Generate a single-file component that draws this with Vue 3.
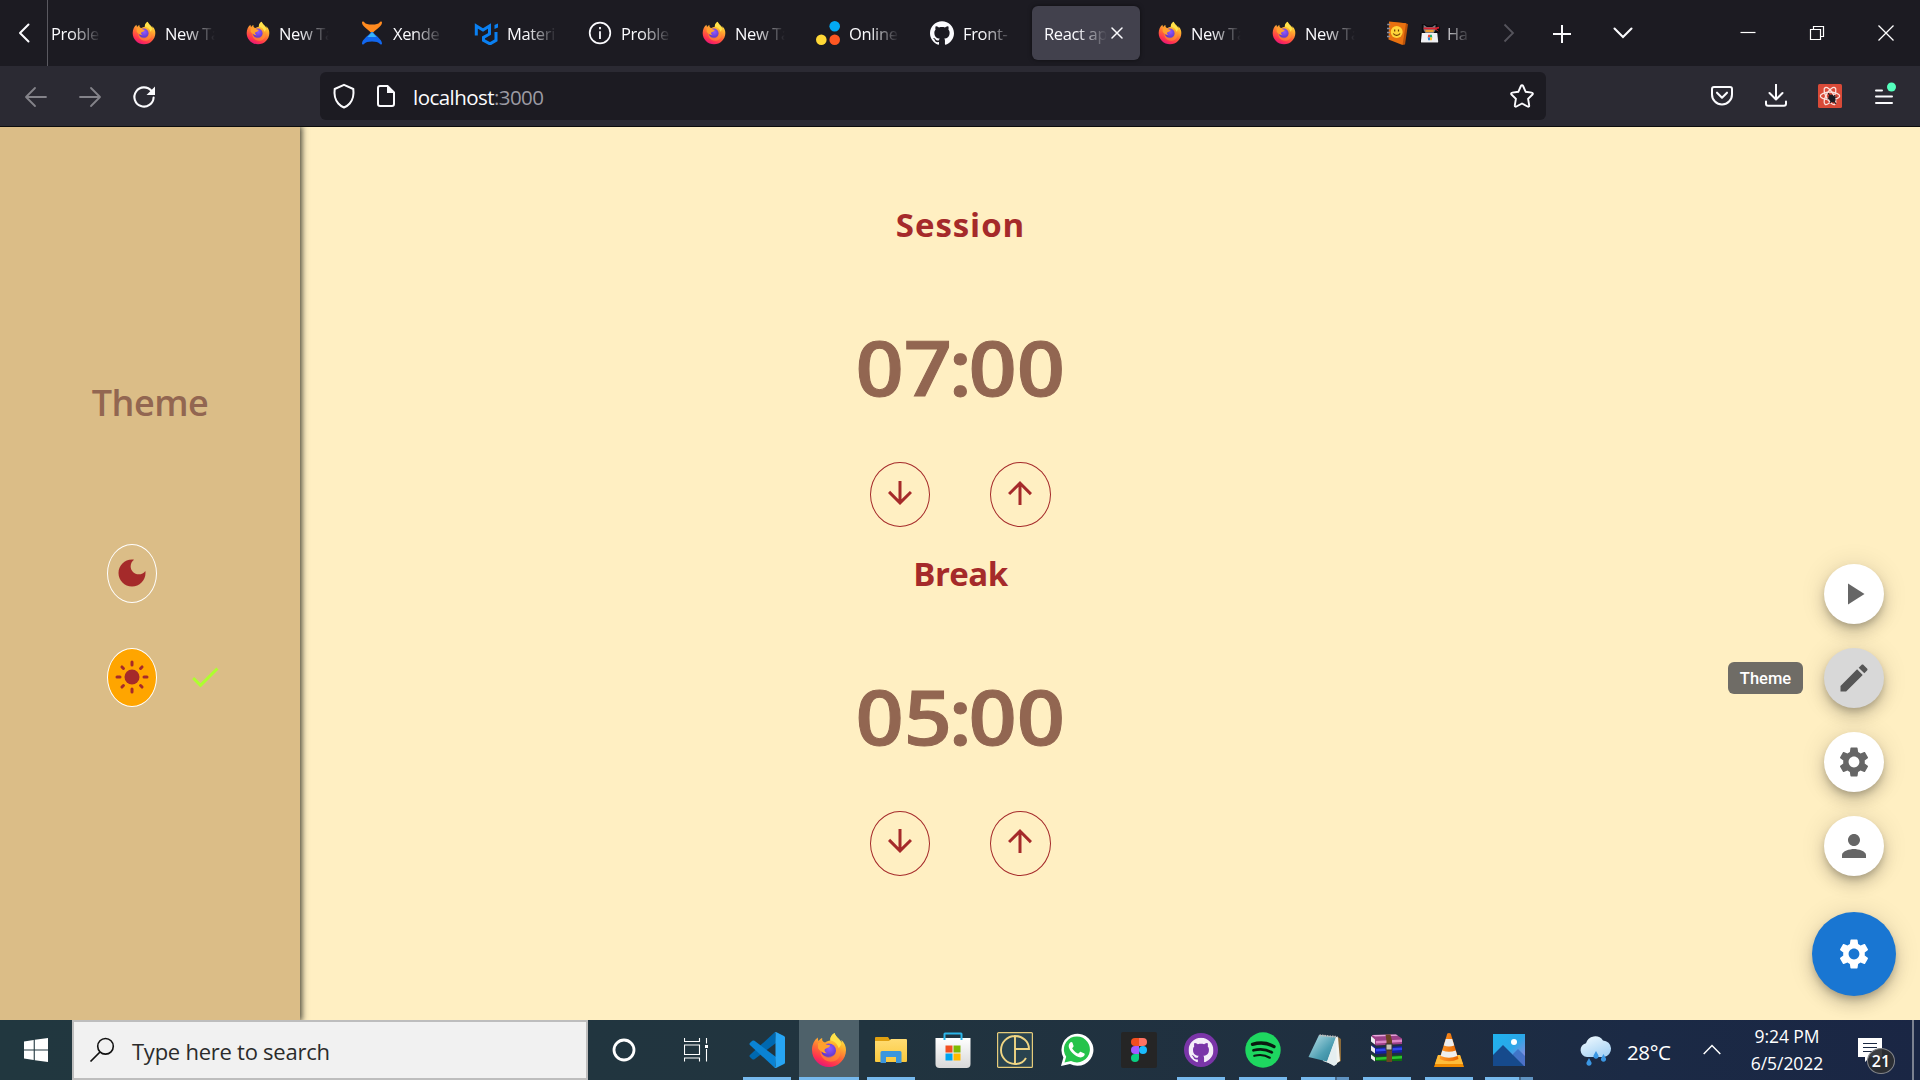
<script setup>
const tabs = [
  { title: 'Proble', kind: 'partial' },
  { title: 'New Ta', icon: 'firefox' },
  { title: 'New Ta', icon: 'firefox' },
  { title: 'Xende', icon: 'xender' },
  { title: 'Materi', icon: 'mui' },
  { title: 'Proble', icon: 'info' },
  { title: 'New Ta', icon: 'firefox' },
  { title: 'Online', icon: 'dots' },
  { title: 'Front-', icon: 'github' },
  { title: 'React ap', kind: 'active' },
  { title: 'New Ta', icon: 'firefox' },
  { title: 'New Ta', icon: 'firefox' },
  { title: 'Ha', icon: 'book', extra: 'ninja', kind: 'last' },
]

const timers = [
  { label: 'Session', time: '07:00', key: 'session' },
  { label: 'Break', time: '05:00', key: 'break' },
]

const apps = [
  { icon: 'vscode', run: true },
  { icon: 'firefox', run: true, active: true },
  { icon: 'explorer', run: true },
  { icon: 'store' },
  { icon: 'ce' },
  { icon: 'whatsapp' },
  { icon: 'figma' },
  { icon: 'ghdesktop', run: true },
  { icon: 'spotify', run: true },
  { icon: 'notepad', run: true, multi: true },
  { icon: 'winrar', run: true },
  { icon: 'vlc', run: true },
  { icon: 'photos', run: true, multi: true },
]

const actions = ['play', 'edit', 'settings', 'person']
</script>

<template>
  <div class="screen">
    <svg class="sprite" width="0" height="0" aria-hidden="true">
      <defs>
        <linearGradient id="ffBody" x1="0.75" y1="0" x2="0.3" y2="1">
          <stop offset="0" stop-color="#fff44f" />
          <stop offset="0.3" stop-color="#ffb52e" />
          <stop offset="0.58" stop-color="#ff6a36" />
          <stop offset="0.82" stop-color="#ff3150" />
          <stop offset="1" stop-color="#e0137f" />
        </linearGradient>
        <radialGradient id="ffGlobe" cx="0.55" cy="0.35" r="0.7">
          <stop offset="0" stop-color="#9059ff" />
          <stop offset="1" stop-color="#5a2fc0" />
        </radialGradient>
        <linearGradient id="folder" x1="0" y1="0" x2="0" y2="1">
          <stop offset="0" stop-color="#ffdc73" />
          <stop offset="1" stop-color="#fbc93d" />
        </linearGradient>
        <linearGradient id="bag" x1="0" y1="0" x2="0" y2="1">
          <stop offset="0" stop-color="#ffffff" />
          <stop offset="1" stop-color="#d8d8d8" />
        </linearGradient>
        <linearGradient id="pad" x1="0" y1="0" x2="1" y2="1">
          <stop offset="0" stop-color="#bfe3ea" />
          <stop offset="0.6" stop-color="#4e9fb3" />
          <stop offset="1" stop-color="#2f7f96" />
        </linearGradient>
        <linearGradient id="cone" x1="0" y1="0" x2="1" y2="0">
          <stop offset="0" stop-color="#ff9a2a" />
          <stop offset="1" stop-color="#e86500" />
        </linearGradient>
        <linearGradient id="sky" x1="0" y1="0" x2="1" y2="1">
          <stop offset="0" stop-color="#1fb3ee" />
          <stop offset="0.5" stop-color="#2aa7e8" />
          <stop offset="1" stop-color="#b07fd8" />
        </linearGradient>
        <linearGradient id="cloud" x1="0" y1="0" x2="0.6" y2="1">
          <stop offset="0" stop-color="#f3fbff" />
          <stop offset="1" stop-color="#a9d4f5" />
        </linearGradient>
      </defs>

      <symbol id="i-firefox" viewBox="0 0 36 36">
        <path fill="url(#ffBody)" d="M33.8 12.5c-.8-1.9-2.4-3.9-3.7-4.6.4.9.8 1.9 1 2.9C29 6.700 25 5.500 23.500 1c-3 1.500-4.500 4.500-4.200 7.500-2 .2-3.800.9-5.200 2-.8-.3-1.800-.5-2.500-1.500-.5-.8-.5-2-.4-3-1.500.5-2.800 1.600-3.500 3-.7-1-1-2.300-.8-3.500C3.500 7.500 1 12.500 1 18c0 9.500 7.600 17 17 17s17-7.500 17-17c0-2-.4-3.800-1.200-5.500z" />
        <path fill="#ffe14a" d="M23.500 1c-3 1.500-4.500 4.500-4.200 7.500 4 .2 7.700 3.500 8.200 8l2.800-4C29.500 7.500 25 5.800 23.500 1z" />
        <circle cx="17.700" cy="18.700" r="7.300" fill="url(#ffGlobe)" />
        <path fill="#ffa02e" d="M7 11c2-1 5-.7 7 .4 1.300 1.300 2.500 1.400 4.300 1.600 1 .1.500 1.700-.3 2.200-1.500.9-3.600 1-4.200 2-.8 1.400.5 3.400 2.200 4-3.500.3-7-2-9-5z" />
        <path fill="#ff9b30" d="M9 18c1.500 6 8 8.500 13 5.500 4-2.400 4.500-8 .5-11.500 5 1.500 7.500 6 6.500 11-1.500 6.500-9.500 8.500-15 5-3.500-2.200-5-6-5-10z" opacity="0.55" />
      </symbol>

      <symbol id="i-xender" viewBox="0 0 24 24">
        <path fill="#ff8a1f" d="M2 1.500c0-1.400 1.800-1.500 2.500 0Q6 3.500 12 3.500T19.500 1.500c.7-1.500 2.500-1.400 2.500 0C22 5.500 16 8 12.800 12h-1.600C8 8 2 5.500 2 1.500z" />
        <path fill="#1267ee" d="M11.200 11h1.600C16 15 22 18.500 22 22.500c0 1.400-1.800 1.500-2.500 0Q18 20.500 12 20.500T4.500 22.500c-.7 1.500-2.500 1.400-2.500 0C2 18.500 8 15 11.200 11z" />
        <path fill="#39b4f7" d="m12 11 4.500 5h-9z" />
      </symbol>

      <symbol id="i-mui" viewBox="0 0 24 24">
        <path fill="none" stroke="#0a80f2" stroke-width="3" d="M2.300 14.500V5L9 9l6.500-4v8l-6 3.400v3l6.500 3.500 6-3.500V11" />
        <path fill="#0a80f2" d="M20.500 4 24 2.500v4L20.500 8z" />
      </symbol>

      <symbol id="i-info" viewBox="0 0 24 24">
        <circle cx="12" cy="12" r="10.300" fill="none" stroke="#fbfbfe" stroke-width="1.700" />
        <path fill="none" stroke="#fbfbfe" stroke-width="1.800" d="M12 10.300V18M12 6v2.200" />
      </symbol>

      <symbol id="i-dots" viewBox="0 0 24 24">
        <circle cx="18.700" cy="5.300" r="5.300" fill="#03a9f4" />
        <circle cx="5.300" cy="18.700" r="5.300" fill="#ffd836" />
        <circle cx="18.700" cy="18.700" r="5.300" fill="#ff5722" />
      </symbol>

      <symbol id="i-github" viewBox="0 0 24 24">
        <path fill="currentColor" d="M12 .297c-6.630 0-12 5.373-12 12 0 5.303 3.438 9.800 8.205 11.385.6.113.82-.258.82-.577 0-.285-.01-1.040-.015-2.040-3.338.724-4.042-1.610-4.042-1.610C4.422 18.070 3.633 17.700 3.633 17.700c-1.087-.744.084-.729.084-.729 1.205.084 1.838 1.236 1.838 1.236 1.070 1.835 2.809 1.305 3.495.998.108-.776.417-1.305.76-1.605-2.665-.3-5.466-1.332-5.466-5.930 0-1.310.465-2.380 1.235-3.220-.135-.303-.54-1.523.105-3.176 0 0 1.005-.322 3.300 1.230.96-.267 1.980-.399 3-.405 1.020.006 2.040.138 3 .405 2.280-1.552 3.285-1.230 3.285-1.230.645 1.653.24 2.873.12 3.176.765.84 1.230 1.910 1.230 3.220 0 4.610-2.805 5.625-5.475 5.920.42.36.81 1.096.81 2.220 0 1.606-.015 2.896-.015 3.286 0 .315.21.69.825.57C20.565 22.092 24 17.592 24 12.297c0-6.627-5.373-12-12-12" />
      </symbol>

      <symbol id="i-book" viewBox="0 0 24 24">
        <path fill="#b9520a" d="M4 1 20 2.200l2 1L19 23.500l-2.500.5-1-2z" />
        <path fill="#e8710f" d="M3 .5 20 2.200 16.500 24 2.500 18.500z" />
        <path stroke="#8a8fa0" stroke-width="1.300" d="M1.200 3.500h3M1 7.500h3M1 11.500h3M1 15.500h3" />
        <circle cx="10.700" cy="11" r="6" fill="#ffd43a" />
        <path fill="none" stroke="#6b3b00" stroke-width="1.200" d="M8.700 8.500v2M12.500 8.500v2M7.300 12.500c1.500 2.500 5.200 2.500 6.800 0" />
      </symbol>

      <symbol id="i-ninja" viewBox="0 0 22 22">
        <path fill="#0b0b0e" d="M2 1h3l3 2h5l3-2h3v3h3v6l-3 2 1 10H0V11h2z" />
        <path fill="#777b82" d="M4 8V2l3.500 2.500h6L17 2v6l-2 3H6z" />
        <path fill="#f0a030" d="M6 7.500h9v2.500H6z" />
        <path fill="#dd2230" d="M4 5h13l4-1v2l-3 .5 3 3-5-2.500H4z" />
        <path fill="#f0f0f3" d="M2 11h17l1 9.500q0 1-1 1H2q-1 0-1-1z" />
        <path fill="#ee4433" d="M9 13h2v3H8.500z" />
        <path fill="#22aa66" d="M11 13h2l.5 3H11z" />
        <path fill="#2288dd" d="M8.500 16H11v3H9z" />
        <path fill="#ffbb22" d="M11 16h2.500L13 19h-2z" />
      </symbol>

      <symbol id="i-vscode" viewBox="0 0 36 36">
        <path fill="#0068b0" d="M26 0 .9 23Q0 24 .9 25L3.300 27.200Q4.400 28 5.500 27.200L27 11z" />
        <path fill="#0a83d4" d="M5.500 8.800Q4.400 8 3.300 8.800L.9 11Q0 12 .9 13L26 36l1-11z" />
        <path fill="#27a5f4" d="M26 .3Q26.600-.2 27.500.3L35 3.900q1 .5 1 1.600v25q0 1.100-1 1.600l-7.500 3.600q-1 .5-2-.4 1 .2 1-1.300V2Q26.500.4 26 .3z" />
      </symbol>

      <symbol id="i-explorer" viewBox="0 0 36 36">
        <path fill="#e0a010" d="M2 6q0-1 1-1h12l2 3v5H2z" />
        <path fill="url(#folder)" d="M2 9h14l2-2h15q1 0 1 1v21q0 1-1 1H3q-1 0-1-1z" />
        <path fill="#3b96dd" d="M9 19h18q1.500 0 1.500 1.500V31H23v-6H13v6H7.500V20.500Q7.500 19 9 19z" />
      </symbol>

      <symbol id="i-store" viewBox="0 0 36 36">
        <path fill="url(#bag)" d="M.5 6h35v26q0 4-4 4h-27q-4 0-4-4z" />
        <path fill="none" stroke="#2cb5e8" stroke-width="2" d="M9.500 8V2q0-.5.5-.5h16q.5 0 .5.500v6" />
        <path fill="#f25022" d="M10.500 13.500h7v7h-7z" />
        <path fill="#7fba00" d="M18.500 13.500h7v7h-7z" />
        <path fill="#00a4ef" d="M10.500 21.500h7v7h-7z" />
        <path fill="#ffb900" d="M18.500 21.500h7v7h-7z" />
      </symbol>

      <symbol id="i-ce" viewBox="0 0 36 36">
        <rect x="0.600" y="0.600" width="34.800" height="34.800" rx="1" fill="#29434f" stroke="#e6cb7a" stroke-width="1.200" />
        <path fill="none" stroke="#f0d583" stroke-width="1.900" d="M18 4A14 14 0 1 0 18 32V4c7 0 14 5 14 13H18M18 32c5 0 9-2.500 11-6" />
      </symbol>

      <symbol id="i-whatsapp" viewBox="0 0 36 36">
        <path fill="#fff" d="M2 34l2.400-8.500A16 16 0 1 1 11 32z" />
        <path fill="#25c34b" d="M5.500 30.500l1.700-5.700A13 13 0 1 1 12 29z" />
        <path fill="#fff" d="M13.400 10.500c-.6-.9-1.500-.7-2.200 0-3 3-1 7 2 10.200 3.300 3.600 8.300 6.300 11.500 3.600 1-.9 1.300-2.200.7-2.700l-3.300-1.700c-.8-.4-1.300.2-2 1.200-.5.6-1 .5-1.900.1-2.300-1-3.900-2.900-4.900-4.600-.5-1 1.500-1.600 1.300-2.700z" />
      </symbol>

      <symbol id="i-figma" viewBox="0 0 36 36">
        <rect width="36" height="36" rx="2" fill="#252525" />
        <path fill="#f24e1e" d="M14 6h4v8h-4a4 4 0 0 1 0-8z" />
        <path fill="#ff7262" d="M18 6h4a4 4 0 0 1 0 8h-4z" />
        <path fill="#a259ff" d="M14 14h4v8h-4a4 4 0 0 1 0-8z" />
        <circle cx="22" cy="18" r="4" fill="#1abcfe" />
        <path fill="#0acf83" d="M14 22h4v4a4 4 0 1 1-4-4z" />
      </symbol>

      <symbol id="i-ghdesktop" viewBox="0 0 36 36">
        <circle cx="18" cy="18" r="17" fill="#7a35a8" />
        <svg x="5.500" y="5.500" width="25" height="25" viewBox="0 0 24 24" color="#f4eef8">
          <use href="#i-github" />
        </svg>
      </symbol>

      <symbol id="i-spotify" viewBox="0 0 36 36">
        <circle cx="18" cy="18" r="17.700" fill="#1ed760" />
        <path fill="none" stroke="#0a1a10" stroke-linecap="round" stroke-width="3.300" d="M7.500 12.300c7-2 15.500-1.300 21.500 2.300" />
        <path fill="none" stroke="#0a1a10" stroke-linecap="round" stroke-width="2.700" d="M8.500 18.300c6-1.700 13-1 18.300 2.100" />
        <path fill="none" stroke="#0a1a10" stroke-linecap="round" stroke-width="2.200" d="M9.300 23.800c5-1.300 11-.8 15.500 1.900" />
      </symbol>

      <symbol id="i-notepad" viewBox="0 0 36 36">
        <path fill="#8a6a3a" d="M31 5l3 2v22l-4 2z" />
        <path fill="#f4f4f0" d="M13 3l18 2 2 24-6 4-11-4z" />
        <path fill="url(#pad)" d="M12 3l17 2-9 24.500L1.500 25z" />
        <path fill="#e5eef0" d="M20 30l9-24 1 26-3 2z" />
        <path stroke="#b9b9b9" stroke-width="2" stroke-dasharray="1.500 1" d="M12.500 3.300l18 1.700" />
      </symbol>

      <symbol id="i-winrar" viewBox="0 0 36 36">
        <path fill="#9c4188" d="M3 3l24-.5 6 4V12L7 13.500 3 10z" />
        <path fill="#dc86c6" d="M7 9l26-1.500v2.500L7 11.500z" />
        <path fill="#e9a9dc" d="M3 3l24-.5 2 1.300-23 .8z" />
        <path fill="#1420a0" d="M3 13l4 3 26-2v6.500L7 22l-4-3z" />
        <path fill="#3247ee" d="M7 17l26-1.500v2.500L7 19.500z" />
        <path fill="#0d6d12" d="M3 22l4 3 26-2v6H7l-4-3.500z" />
        <path fill="#2cc62e" d="M7 25.500l26-1.500v2.500L7 28z" />
        <path fill="#eee" d="M2 4l4 3.500v5L2 9.500zM2 13.500l4 3v5l-4-3zM2 22.500l4 3v4l-4-3z" />
        <path fill="#6b4423" d="M16.500 2.500h5l1.500 6v21.500h-5.500V9z" />
        <rect x="17" y="12" width="6" height="6" fill="#c9c2b2" stroke="#333" />
      </symbol>

      <symbol id="i-vlc" viewBox="0 0 36 36">
        <path fill="#f08a00" d="M7 23h22l4 12H3z" />
        <path fill="#ffbc3a" d="M7 23h22l3 9H4z" />
        <path fill="url(#cone)" d="M16.300 1.500q1.700-1 3.400 0L27.500 27q-9.500 4.500-19 0z" />
        <path fill="#eee" d="M14.800 7h6.400l2 6.500q-5.200 1.800-10.400 0zM11.300 18.500q6.700 2.500 13.400 0l1.600 5.500q-8.300 3.500-16.600 0z" />
      </symbol>

      <symbol id="i-photos" viewBox="0 0 36 36">
        <rect x="2" y="2" width="32" height="32" fill="url(#sky)" />
        <path fill="#3a6bc0" d="M22 34V22l5-5 7 7v10z" opacity="0.8" />
        <path fill="#164a8c" d="M2 23 12 13 33 34H2z" />
        <circle cx="23" cy="10" r="3" fill="#fff" />
      </symbol>

      <symbol id="i-weather" viewBox="0 0 36 36">
        <path fill="url(#cloud)" d="M9 23a7 7 0 0 1-1-13.800A9.500 9.500 0 0 1 25 6.500 8.300 8.300 0 0 1 26 23z" />
        <path fill="#3b97e3" d="M18 17l2.500 4.500a2.600 2.600 0 1 1-5 0zM11 24l2.500 4.500a2.600 2.600 0 1 1-5 0zM25.500 20l2.500 4.500a2.600 2.600 0 1 1-5 0z" />
      </symbol>

      <symbol id="i-play" viewBox="0 0 24 24"><path fill="currentColor" d="M8 5v14l11-7z" /></symbol>
      <symbol id="i-edit" viewBox="0 0 24 24"><path fill="currentColor" d="M3 17.250V21h3.750L17.810 9.940l-3.750-3.750L3 17.250zM20.710 7.040c.39-.39.39-1.020 0-1.410l-2.340-2.340c-.39-.39-1.020-.39-1.410 0l-1.830 1.830 3.750 3.750 1.830-1.830z" /></symbol>
      <symbol id="i-settings" viewBox="0 0 24 24"><path fill="currentColor" d="M19.140 12.940c.04-.3.06-.61.06-.94 0-.32-.02-.64-.07-.94l2.030-1.580c.18-.14.23-.41.12-.61l-1.920-3.320c-.12-.22-.37-.29-.59-.22l-2.390.96c-.5-.38-1.030-.7-1.620-.94l-.36-2.540c-.04-.24-.24-.41-.48-.41h-3.840c-.24 0-.43.17-.47.41l-.36 2.540c-.59.24-1.130.57-1.620.94l-2.390-.96c-.22-.08-.47 0-.59.22L2.740 8.870c-.12.21-.08.47.12.61l2.030 1.580c-.05.3-.09.63-.09.94s.02.64.07.94l-2.030 1.580c-.18.14-.23.41-.12.61l1.920 3.320c.12.22.37.29.59.22l2.390-.96c.5.38 1.030.7 1.620.94l.36 2.540c.05.24.24.41.48.41h3.840c.24 0 .44-.17.47-.41l.36-2.540c.59-.24 1.130-.56 1.620-.94l2.390.96c.22.08.47 0 .59-.22l1.920-3.320c.12-.22.07-.47-.12-.61l-2.010-1.580zM12 15.600c-1.980 0-3.600-1.620-3.600-3.600s1.620-3.600 3.600-3.600 3.600 1.620 3.600 3.600-1.620 3.600-3.600 3.600z" /></symbol>
      <symbol id="i-person" viewBox="0 0 24 24"><path fill="currentColor" d="M12 12c2.210 0 4-1.790 4-4s-1.790-4-4-4-4 1.790-4 4 1.790 4 4 4zm0 2c-2.670 0-8 1.340-8 4v2h16v-2c0-2.660-5.330-4-8-4z" /></symbol>
    </svg>

    <header class="tabbar">
      <div class="scroll-left">
        <svg width="12" height="20" viewBox="0 0 12 20"><path d="M10.500 1.500 2 10l8.500 8.500" fill="none" stroke="#fbfbfe" stroke-width="2" stroke-linecap="round" stroke-linejoin="round" /></svg>
      </div>
      <div v-for="(tab, i) in tabs" :key="i" class="tab" :class="tab.kind">
        <svg v-if="tab.icon" class="tab-icon" width="24" height="24"><use :href="'#i-' + tab.icon" /></svg>
        <svg v-if="tab.extra" class="tab-extra" width="20" height="22"><use :href="'#i-' + tab.extra" /></svg>
        <span class="tab-title">{{ tab.title }}</span>
        <svg v-if="tab.kind === 'active'" class="tab-close" width="12" height="12" viewBox="0 0 12 12"><path d="M1 1l10 10M11 1 1 11" stroke="#fbfbfe" stroke-width="1.500" stroke-linecap="round" /></svg>
      </div>
      <div class="tab-tools">
        <svg width="12" height="20" viewBox="0 0 12 20"><path d="M1.500 1.500 10 10l-8.500 8.500" fill="none" stroke="#55545c" stroke-width="1.800" /></svg>
        <svg class="plus" width="20" height="20" viewBox="0 0 20 20"><path d="M10 1v18M1 10h18" stroke="#fbfbfe" stroke-width="2" /></svg>
        <svg class="chev" width="20" height="12" viewBox="0 0 20 12"><path d="M1.500 1.500 10 10l8.500-8.500" fill="none" stroke="#fbfbfe" stroke-width="2.100" stroke-linecap="round" /></svg>
      </div>
      <div class="window-tools">
        <svg width="16" height="16" viewBox="0 0 16 16"><path d="M0.500 7.500h15" stroke="#fff" stroke-width="1.200" /></svg>
        <svg width="16" height="16" viewBox="0 0 16 16"><path d="M1.500 4.500h10v10h-10zM4.500 4.500v-3h10v10h-3" fill="none" stroke="#fff" stroke-width="1.200" /></svg>
        <svg width="16" height="16" viewBox="0 0 16 16"><path d="M.5.500l15 15M15.500.500l-15 15" stroke="#fff" stroke-width="1.300" /></svg>
      </div>
    </header>

    <div class="navbar">
      <div class="nav-buttons">
        <svg width="24" height="24" viewBox="0 0 24 24"><path d="M22 12H2.500M11 3l-9 9 9 9" fill="none" stroke="#84838a" stroke-width="1.800" stroke-linecap="round" stroke-linejoin="round" /></svg>
        <svg width="24" height="24" viewBox="0 0 24 24"><path d="M2 12h19.500M13 3l9 9-9 9" fill="none" stroke="#84838a" stroke-width="1.800" stroke-linecap="round" stroke-linejoin="round" /></svg>
        <svg width="24" height="24" viewBox="0 0 24 24"><path d="M19.500 6A9.600 9.600 0 1 0 21.600 12.500" fill="none" stroke="#fbfbfe" stroke-width="2.100" stroke-linecap="round" /><path d="M23 1.500v8.500h-8.500z" fill="#fbfbfe" /></svg>
      </div>
      <div class="urlbar">
        <svg width="24" height="26" viewBox="0 0 24 26"><path d="M12 1.800 21.300 6q1.200 9-3.600 14.500-2.300 2.600-5.700 4-3.400-1.400-5.700-4Q1.500 15 2.700 6z" fill="none" stroke="#fbfbfe" stroke-width="2" stroke-linejoin="round" /></svg>
        <svg class="doc" width="20" height="24" viewBox="0 0 20 24"><path d="M4 2h7.500L18 8.500V20q0 2-2 2H4q-2 0-2-2V4q0-2 2-2z" fill="none" stroke="#fbfbfe" stroke-width="2" /><path d="M11 2l7 7h-7z" fill="#fbfbfe" /></svg>
        <span class="url"><b>localhost</b>:3000</span>
        <svg class="star" width="26" height="26" viewBox="0 0 26 26"><path d="M13 2.200c.6 0 .9.400 1.100.8l2.600 5.800 6.100.8c1 .1 1.400 1.200.7 1.900l-4.400 4.400 1.100 6.500c.2 1-.8 1.600-1.600 1.100L13 20.500l-5.600 3c-.8.500-1.800-.1-1.600-1.100l1.100-6.500-4.400-4.400c-.7-.7-.3-1.800.7-1.900l6.100-.8L11.900 3c.2-.4.500-.8 1.100-.8z" fill="none" stroke="#fbfbfe" stroke-width="1.900" /></svg>
      </div>
      <div class="nav-tools">
        <svg width="24" height="24" viewBox="0 0 24 24"><path d="M4 3h16q2 0 2 2v5.500a10 10 0 0 1-20 0V5q0-2 2-2z" fill="none" stroke="#fbfbfe" stroke-width="2" /><path d="m7 8.700 5 5 5-5" fill="none" stroke="#fbfbfe" stroke-width="2.100" stroke-linecap="round" stroke-linejoin="round" /></svg>
        <svg width="24" height="24" viewBox="0 0 24 24"><path d="M12 .5v14.500M5.500 9l6.500 6.500L18.500 9M2 17.500v2.300q0 2 2 2h16q2 0 2-2v-2.300" fill="none" stroke="#fbfbfe" stroke-width="2" stroke-linecap="round" stroke-linejoin="round" /></svg>
        <svg width="24" height="24" viewBox="0 0 24 24">
          <rect width="24" height="24" rx="1.500" fill="#d94a38" />
          <g fill="none" stroke="#fbe3df" stroke-width="1.300">
            <ellipse cx="12" cy="12" rx="9.700" ry="3.800" />
            <ellipse cx="12" cy="12" rx="9.700" ry="3.800" transform="rotate(60 12 12)" />
            <ellipse cx="12" cy="12" rx="9.700" ry="3.800" transform="rotate(120 12 12)" />
          </g>
          <ellipse cx="14" cy="14.500" rx="3" ry="4.200" fill="#1c1b22" transform="rotate(-35 14 14.500)" />
          <path d="M10 9l8 11M9.500 15l9-2M12 19l5-8" stroke="#1c1b22" stroke-width="1.200" />
        </svg>
        <svg width="24" height="30" viewBox="0 0 24 30"><path d="M4 12.500h6M4 18.500h16M4 25h16" stroke="#fbfbfe" stroke-width="2" stroke-linecap="round" /><circle cx="19.500" cy="9" r="4.500" fill="#54ffbd" /></svg>
      </div>
    </div>

    <section class="page">
      <main class="content">
        <div v-for="t in timers" :key="t.key" class="timer" :class="t.key">
          <h2>{{ t.label }}</h2>
          <div class="time">
            <span>{{ t.time.slice(0, 2) }}</span><span class="colon">:</span><span>{{ t.time.slice(3) }}</span>
          </div>
          <div class="steps">
            <button class="step">
              <svg width="36" height="36" viewBox="0 0 24 24"><path fill="currentColor" d="m20 12-1.410-1.410L13 16.170V4h-2v12.170l-5.580-5.590L4 12l8 8 8-8z" /></svg>
            </button>
            <button class="step up">
              <svg width="36" height="36" viewBox="0 0 24 24"><path fill="currentColor" d="m4 12 1.410 1.410L11 7.830V20h2V7.830l5.580 5.590L20 12l-8-8-8 8z" /></svg>
            </button>
          </div>
        </div>
      </main>

      <aside class="drawer">
        <h2>Theme</h2>
        <div class="choice">
          <button class="mode">
            <svg width="36" height="36" viewBox="0 0 24 24"><path fill="currentColor" d="M12 3c-4.970 0-9 4.030-9 9s4.030 9 9 9 9-4.030 9-9c0-.46-.04-.92-.1-1.360-.98 1.370-2.580 2.260-4.400 2.260-2.980 0-5.400-2.420-5.400-5.400 0-1.810.89-3.420 2.260-4.400-.44-.06-.9-.1-1.360-.1z" /></svg>
          </button>
        </div>
        <div class="choice">
          <button class="mode light">
            <svg width="36" height="36" viewBox="0 0 24 24"><circle cx="12" cy="12" r="5" fill="currentColor" /><path fill="none" stroke="currentColor" stroke-width="2" stroke-linecap="round" d="M2 12h2M20 12h2M12 2v2M12 20v2M5.300 5.300l1 1M17.700 17.700l1 1M18.700 5.300l-1 1M6.300 17.700l-1 1" /></svg>
          </button>
          <svg class="check" width="36" height="36" viewBox="0 0 24 24"><path fill="#adff2f" d="M9 16.170 4.830 12l-1.420 1.410L9 19 21 7l-1.410-1.410z" /></svg>
        </div>
      </aside>

      <div class="dial">
        <div v-for="a in actions" :key="a" class="fab" :class="{ hover: a === 'edit' }">
          <svg width="36" height="36"><use :href="'#i-' + a" /></svg>
          <span v-if="a === 'edit'" class="tip">Theme</span>
        </div>
        <div class="fab main-fab">
          <svg width="36" height="36"><use href="#i-settings" /></svg>
        </div>
      </div>
    </section>

    <footer class="taskbar">
      <div class="start">
        <svg width="24" height="24" viewBox="0 0 24 24"><path fill="#fff" d="M0 3.400 9.700 2v9.400H0zM10.800 1.800 24 0v11.400H10.800zM0 12.500h9.700V22L0 20.600zM10.800 12.500H24V24l-13.200-1.800z" /></svg>
      </div>
      <div class="search">
        <svg width="26" height="26" viewBox="0 0 26 26"><circle cx="16.500" cy="9.300" r="7.800" fill="none" stroke="#111" stroke-width="1.600" /><path d="M11 15 1.500 24.500" stroke="#111" stroke-width="1.700" /></svg>
        <span>Type here to search</span>
      </div>
      <div class="sys">
        <svg width="26" height="26" viewBox="0 0 26 26"><circle cx="13" cy="13" r="10" fill="none" stroke="#fff" stroke-width="2.800" /></svg>
      </div>
      <div class="sys view">
        <svg width="24" height="24" viewBox="0 0 24 24"><path d="M.5 0v3.500h15V0M.5 7h15v9.500H.5zM.5 23.500V20h15v3.500M22.500 0v5.500M22.500 11v12.500" fill="none" stroke="#fff" stroke-width="1.100" /><path d="M21 7h3v3h-3z" fill="#fff" /></svg>
      </div>
      <div class="apps">
        <div v-for="app in apps" :key="app.icon" class="app" :class="{ active: app.active, run: app.run, multi: app.multi }">
          <svg width="36" height="36"><use :href="'#i-' + app.icon" /></svg>
        </div>
      </div>
      <div class="tray">
        <svg class="weather" width="36" height="36"><use href="#i-weather" /></svg>
        <span class="temp">28°C</span>
        <svg class="caret" width="18" height="11" viewBox="0 0 18 11"><path d="M.7 10 9 1.500l8.300 8.500" fill="none" stroke="#fff" stroke-width="1.500" /></svg>
        <div class="clock"><span>9:24 PM</span><span>6/5/2022</span></div>
        <div class="notify">
          <svg width="24" height="24" viewBox="0 0 24 24"><path fill="#fff" d="M0 0h24v19H12l-5 5v-5H0z" /><path d="M5 5.500h14M5 9.500h14M5 13.500h9" stroke="#1b2943" stroke-width="1.100" /></svg>
          <span class="badge">21</span>
        </div>
        <i class="peek"></i>
      </div>
    </footer>
  </div>
</template>

<style>
body {
  overflow: hidden;
}
</style>

<style scoped>
.screen {
  display: flex;
  flex-direction: column;
  width: 1920px;
  height: 1080px;
  overflow: hidden;
  font-family: "Open Sans", "Noto Sans", sans-serif;
}
svg {
  display: block;
  flex: none;
}
.sprite {
  position: absolute;
}
button {
  padding: 0;
  font: inherit;
}

/* tab strip */
.tabbar {
  display: flex;
  height: 66px;
  flex: none;
  background: #1c1b22;
  color: #fbfbfe;
  font-size: 16.500px;
}
.scroll-left {
  box-sizing: border-box;
  width: 48px;
  display: flex;
  align-items: center;
  padding-left: 18px;
  border-right: 1px solid #5a5960;
}
.tab {
  box-sizing: border-box;
  width: 108px;
  height: 54px;
  margin: 6px 6px 6px 0;
  padding: 0 12px;
  display: flex;
  align-items: center;
  flex: none;
  border-radius: 6px;
}
.tab.partial {
  width: 66px;
  padding-left: 3px;
}
.tab.active {
  background: #42414d;
  box-shadow: 0 0 4px rgba(0, 0, 0, 0.5);
}
.tab-icon {
  margin-right: 9px;
}
.tab-extra {
  margin-right: 7px;
}
.tab-title {
  flex: none;
  width: 52px;
  white-space: nowrap;
  line-height: 54px;
  padding-top: 1px;
  letter-spacing: -0.350px;
  -webkit-mask-image: linear-gradient(to left, transparent 2px, #000 32px);
  mask-image: linear-gradient(to left, transparent 2px, #000 32px);
}
.tab.last {
  padding-right: 0;
}
.last .tab-icon {
  margin-right: 10px;
}
.last .tab-title {
  width: 26px;
}
.tab.active .tab-title {
  width: 65px;
}
.tab-close {
  margin-left: 2px;
}
.tab-tools {
  display: flex;
  align-items: center;
  padding-left: 15px;
}
.plus {
  margin: 2px 0 0 37px;
}
.chev {
  margin-left: 41px;
}
.window-tools {
  margin-left: auto;
  display: flex;
  align-items: center;
  gap: 53px;
  padding-right: 26px;
}

/* toolbar */
.navbar {
  box-sizing: border-box;
  display: flex;
  height: 61px;
  flex: none;
  padding-top: 6px;
  background: #2b2a33;
  border-bottom: 1px solid #0c0c0d;
}
.nav-buttons {
  width: 320px;
  height: 50px;
  display: flex;
  align-items: center;
  gap: 30px;
  padding-left: 24px;
  box-sizing: border-box;
}
.urlbar {
  box-sizing: border-box;
  width: 1226px;
  height: 48px;
  display: flex;
  align-items: center;
  padding: 0 11px 0 12px;
  border-radius: 6px;
  background: #1c1b22;
}
.doc {
  margin-left: 20px;
}
.url {
  margin-left: 17px;
  font-size: 20.500px;
  line-height: 48px;
  padding-top: 1px;
  letter-spacing: -0.550px;
  color: #9b9aa2;
}
.url b {
  font-weight: 400;
  color: #fbfbfe;
}
.star {
  margin-left: auto;
}
.nav-tools {
  height: 48px;
  margin-left: auto;
  display: flex;
  align-items: center;
  gap: 30px;
  padding-right: 24px;
}
.nav-tools svg:last-child {
  margin: -6px 0 0;
}

/* page */
.page {
  position: relative;
  height: 893px;
  flex: none;
  background: #ffefc2;
  overflow: hidden;
}
.content {
  display: flex;
  flex-direction: column;
  align-items: center;
  gap: 23px;
  padding: 74px 0 0 1px;
}
.timer {
  display: flex;
  flex-direction: column;
  align-items: center;
}
.timer h2 {
  margin: 0;
  font-size: 33px;
  line-height: 48px;
  font-weight: 700;
  letter-spacing: 0.950px;
  color: #a52a2a;
}
.break h2 {
  letter-spacing: -0.500px;
}
.time {
  margin-top: 67px;
  height: 101px;
  line-height: 101px;
  font-size: 76px;
  font-weight: 600;
  color: #926651;
  -webkit-text-stroke: 1px #926651;
  transform: scaleX(1.110);
  white-space: nowrap;
}
.colon {
  margin: 0 -3px;
}
.steps {
  display: flex;
  gap: 60px;
  margin-top: 45px;
}
.step {
  box-sizing: border-box;
  width: 60px;
  height: 65px;
  display: flex;
  justify-content: center;
  align-items: center;
  padding-bottom: 4px;
  background: none;
  border: 1px solid #a52a2a;
  border-radius: 50%;
  color: #a52a2a;
}
.step.up {
  width: 61px;
  padding-right: 1px;
}
.break .step {
  padding-bottom: 6px;
}

.drawer {
  position: absolute;
  left: 0;
  top: 0;
  width: 300px;
  height: 100%;
  background: #dbbd87;
  box-shadow: 1px 0 6px 1px rgba(40, 40, 30, 0.850);
}
.drawer h2 {
  margin: 250px 0 115px;
  font-size: 36px;
  line-height: 52px;
  font-weight: 600;
  letter-spacing: -0.500px;
  text-align: center;
  color: #926651;
}
.choice {
  display: flex;
  align-items: center;
  padding-left: 107px;
  margin-bottom: 45px;
}
.mode {
  box-sizing: border-box;
  width: 50px;
  height: 59px;
  display: flex;
  justify-content: center;
  align-items: center;
  padding-bottom: 1px;
  border: 1px solid #fff;
  border-radius: 50%;
  background: none;
  color: #a52a2a;
}
.mode.light {
  background: orange;
}
.check {
  margin: -1px 0 0 30px;
}

/* speed dial */
.dial {
  position: absolute;
  right: 24px;
  top: 437px;
  width: 84px;
  display: flex;
  flex-direction: column;
  align-items: center;
  gap: 24px;
}
.fab {
  position: relative;
  width: 60px;
  height: 60px;
  display: flex;
  align-items: center;
  justify-content: center;
  border-radius: 50%;
  background: #fff;
  color: #666;
  box-shadow: 0 4.500px 7.500px -1.500px rgba(0, 0, 0, 0.2), 0 9px 15px rgba(0, 0, 0, 0.140), 0 1.500px 27px rgba(0, 0, 0, 0.120);
}
.fab.hover {
  background: #d8d8d8;
  color: #565656;
}
.main-fab {
  width: 84px;
  height: 84px;
  margin-top: 12px;
  background: #1976d2;
  color: #fff;
}
.tip {
  position: absolute;
  right: 81px;
  top: 14px;
  width: 75px;
  height: 32px;
  border-radius: 6px;
  background: #6f6c66;
  color: #fff;
  font: 500 16.500px/33px Roboto, sans-serif;
  text-align: center;
}

/* taskbar */
.taskbar {
  display: flex;
  height: 60px;
  flex: none;
  background: linear-gradient(90deg, #21373f 0, #21343f 45%, #1f2f40 70%, #1b2a45 85%, #1a2644 100%);
  color: #fff;
}
.start,
.sys {
  width: 72px;
  display: flex;
  align-items: center;
  justify-content: center;
}
.sys.view {
  box-sizing: border-box;
  width: 76px;
  justify-content: flex-start;
  padding-left: 24px;
}
.search {
  box-sizing: border-box;
  width: 516px;
  border: 2px solid #bdbdbd;
  background: #f1f1f1;
  display: flex;
  align-items: center;
  padding-left: 15px;
  color: #2b2b2b;
  font-size: 22px;
  letter-spacing: -0.250px;
}
.search span {
  margin-left: 17px;
  line-height: 56px;
  padding-top: 1px;
}
.apps {
  display: flex;
}
.app {
  position: relative;
  width: 60px;
  height: 60px;
  margin: 0 1px;
  display: flex;
  align-items: center;
  justify-content: center;
}
.app:last-child {
  margin: 0 3px 0 -1px;
}
.app.active {
  background: #4e616a;
}
.app.run::after {
  content: "";
  position: absolute;
  left: 6px;
  right: 6px;
  bottom: 0;
  height: 3px;
  background: #76b9ed;
}
.app.active::after {
  left: 0;
  right: 0;
}
.app.multi::after {
  background: linear-gradient(90deg, #76b9ed 34px, #46698a 34px, #46698a 36px, #5f93c2 36px);
}
.tray {
  flex: 1;
  display: flex;
  align-items: center;
}
.weather {
  margin: 3px 0 0 36px;
}
.temp {
  margin-left: 13px;
  width: 48px;
  font-size: 20.500px;
  letter-spacing: -0.400px;
  padding-top: 3px;
  white-space: nowrap;
}
.caret {
  margin: -1px 0 0 28px;
}
.clock {
  margin-left: 25px;
  width: 82px;
  display: flex;
  flex-direction: column;
  align-items: center;
  font-size: 17.500px;
  line-height: 27px;
  letter-spacing: -0.050px;
  white-space: nowrap;
}
.notify {
  position: relative;
  margin-left: 30px;
  width: 24px;
  height: 24px;
}
.badge {
  position: absolute;
  left: 9px;
  top: 10px;
  box-sizing: border-box;
  width: 28px;
  height: 26px;
  border: 1px solid #84868a;
  border-radius: 50%;
  background: rgba(45, 47, 50, 0.920);
  font-size: 16px;
  font-weight: 600;
  line-height: 24px;
  text-align: center;
}
.peek {
  margin-left: auto;
  margin-right: 6px;
  width: 2px;
  height: 60px;
  background: #7b8190;
}
</style>
